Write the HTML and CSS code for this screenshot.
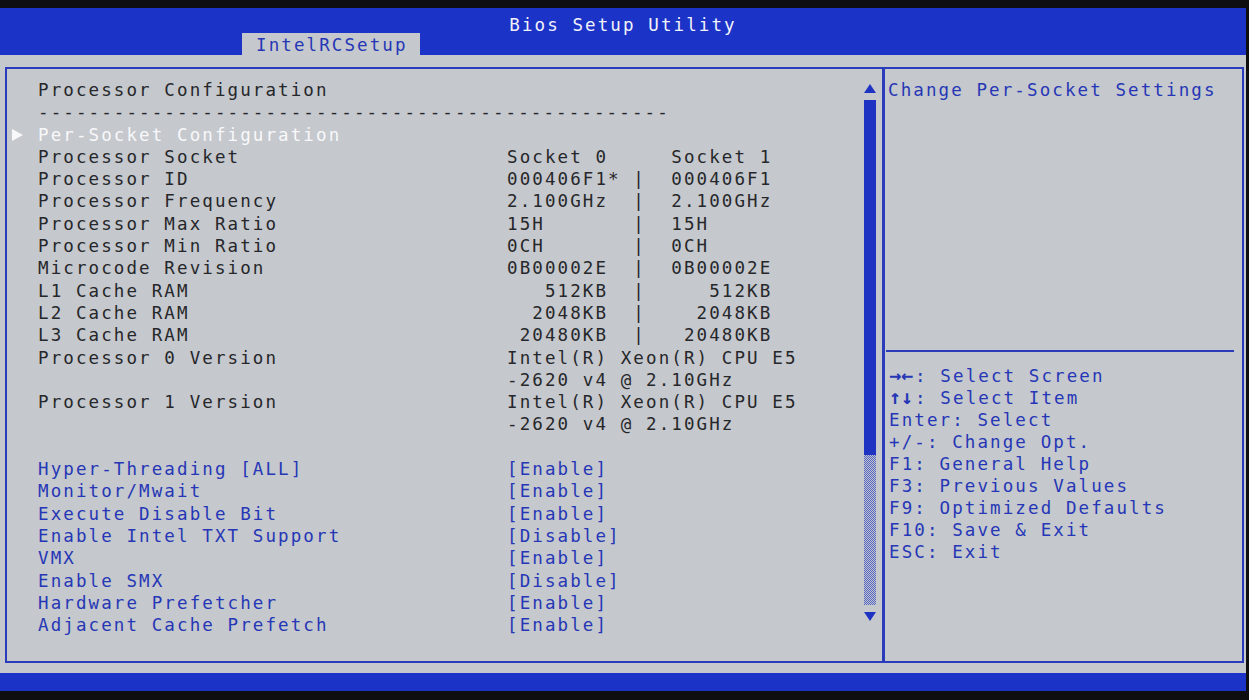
FILE: index.html
```html
<!DOCTYPE html>
<html lang="en">
  <head>
    <meta charset="UTF-8" />
    <title>Bios Setup Utility</title>
    <link rel="stylesheet" href="styles.css">
  </head>
  <body>
    <div class="screen">
      <header class="topbar">
        <div class="title">Bios Setup Utility</div>
        <div class="tabs"><span class="tab">IntelRCSetup</span></div>
      </header>

      <main class="main">
        <section class="setup">
          <div class="items">
            <div class="row"><span class="mark"></span><span class="wide">Processor Configuration</span></div>
            <div class="row"><span class="mark"></span><span class="wide">--------------------------------------------------</span></div>
            <div class="row active"><span class="mark"><i class="caret"></i></span><span class="wide">Per-Socket Configuration</span></div>
            <div class="row"><span class="mark"></span><span>Processor Socket</span><span>Socket 0     Socket 1</span></div>
            <div class="row"><span class="mark"></span><span>Processor ID</span><span>000406F1* |  000406F1</span></div>
            <div class="row"><span class="mark"></span><span>Processor Frequency</span><span>2.100GHz  |  2.100GHz</span></div>
            <div class="row"><span class="mark"></span><span>Processor Max Ratio</span><span>15H       |  15H</span></div>
            <div class="row"><span class="mark"></span><span>Processor Min Ratio</span><span>0CH       |  0CH</span></div>
            <div class="row"><span class="mark"></span><span>Microcode Revision</span><span>0B00002E  |  0B00002E</span></div>
            <div class="row"><span class="mark"></span><span>L1 Cache RAM</span><span>   512KB  |     512KB</span></div>
            <div class="row"><span class="mark"></span><span>L2 Cache RAM</span><span>  2048KB  |    2048KB</span></div>
            <div class="row"><span class="mark"></span><span>L3 Cache RAM</span><span> 20480KB  |   20480KB</span></div>
            <div class="row"><span class="mark"></span><span>Processor 0 Version</span><span>Intel(R) Xeon(R) CPU E5</span></div>
            <div class="row"><span class="mark"></span><span></span><span>-2620 v4 @ 2.10GHz</span></div>
            <div class="row"><span class="mark"></span><span>Processor 1 Version</span><span>Intel(R) Xeon(R) CPU E5</span></div>
            <div class="row"><span class="mark"></span><span></span><span>-2620 v4 @ 2.10GHz</span></div>
            <div class="row"></div>
            <div class="row opt"><span class="mark"></span><span>Hyper-Threading [ALL]</span><span>[Enable]</span></div>
            <div class="row opt"><span class="mark"></span><span>Monitor/Mwait</span><span>[Enable]</span></div>
            <div class="row opt"><span class="mark"></span><span>Execute Disable Bit</span><span>[Enable]</span></div>
            <div class="row opt"><span class="mark"></span><span>Enable Intel TXT Support</span><span>[Disable]</span></div>
            <div class="row opt"><span class="mark"></span><span>VMX</span><span>[Enable]</span></div>
            <div class="row opt"><span class="mark"></span><span>Enable SMX</span><span>[Disable]</span></div>
            <div class="row opt"><span class="mark"></span><span>Hardware Prefetcher</span><span>[Enable]</span></div>
            <div class="row opt"><span class="mark"></span><span>Adjacent Cache Prefetch</span><span>[Enable]</span></div>
          </div>
          <div class="scrollbar">
            <span class="arrow up"></span>
            <span class="thumb"></span>
            <span class="track"></span>
            <span class="arrow down"></span>
          </div>
        </section>

        <aside class="help">
          <div class="help-top">Change Per-Socket Settings</div>
          <ul class="keys">
            <li><b>→←</b>: Select Screen</li>
            <li><b>↑↓</b>: Select Item</li>
            <li>Enter: Select</li>
            <li>+/-: Change Opt.</li>
            <li>F1: General Help</li>
            <li>F3: Previous Values</li>
            <li>F9: Optimized Defaults</li>
            <li>F10: Save &amp; Exit</li>
            <li>ESC: Exit</li>
          </ul>
        </aside>
      </main>

      <footer class="bottombar"></footer>
    </div>
  </body>
</html>
```

FILE: styles.css
```css
/* Base */
body {
  margin: 0;
  background: #0e0e11;
  font-family: "DejaVu Sans Mono", "Liberation Mono", monospace;
  font-size: 17.5px;
  letter-spacing: 2.1px;
  color: #26272a;
  overflow: hidden;
}

.screen {
  width: 1246px;
  height: 700px;
  padding-top: 8px;
  box-sizing: border-box;
  display: flex;
  flex-direction: column;
}

/* Top bar and tab */
.topbar {
  height: 47px;
  background: #1c33c8;
  display: flex;
  flex-direction: column;
}

.title {
  color: #f1f2f8;
  text-align: center;
  line-height: 20px;
  height: 25px;
  box-sizing: border-box;
  padding-top: 7px;
}

.tabs {
  padding-left: 242px;
}

.tab {
  display: inline-block;
  background: #c5c8cd;
  color: #2537b6;
  line-height: 19px;
  height: 22px;
  box-sizing: border-box;
  padding: 3px 12px 0 14px;
}

/* Main area */
.main {
  height: 618px;
  box-sizing: border-box;
  background: #c5c8cd;
  display: flex;
  padding: 12px 2px 10px 5px;
}

.setup {
  flex: 1;
  display: flex;
  border: 2px solid #2a3bbb;
  border-right: 0;
  padding: 10px 6px 0 5px;
}

.items {
  flex: 1;
}

.row {
  display: grid;
  grid-template-columns: 26px 469px auto;
  height: 22.3px;
  line-height: 22.3px;
  white-space: pre;
}

.row .wide {
  grid-column: 2 / -1;
}

.row.active {
  color: #f8f8fa;
}

.row.opt {
  color: #2537b6;
}

.mark {
  display: flex;
  align-items: center;
}

.caret {
  width: 0;
  height: 0;
  border-left: 11px solid #f8f8fa;
  border-top: 6px solid transparent;
  border-bottom: 6px solid transparent;
}

/* Scrollbar */
.scrollbar {
  width: 12px;
  margin-top: 5px;
  display: flex;
  flex-direction: column;
  align-items: center;
}

.arrow {
  width: 0;
  height: 0;
  border-left: 6px solid transparent;
  border-right: 6px solid transparent;
}

.arrow.up {
  border-bottom: 9px solid #1f33c2;
}

.arrow.down {
  margin-top: 7px;
  border-top: 9px solid #1f33c2;
}

.thumb {
  width: 12px;
  height: 355px;
  margin-top: 7px;
  background: #1f33c2;
}

.track {
  width: 12px;
  height: 150px;
  background: repeating-conic-gradient(#5262c4 0 25%, #c5c8cd 0 50%) 0 0 / 2px 2px;
}

/* Help panel */
.help {
  width: 362px;
  box-sizing: border-box;
  border: 2px solid #2a3bbb;
  border-left-width: 3px;
  color: #2537b6;
}

.help-top {
  height: 283px;
  box-sizing: border-box;
  padding: 10px 0 0 2px;
  margin: 0 8px 0 1px;
  line-height: 22.3px;
  border-bottom: 2px solid #2a3bbb;
}

.keys {
  list-style: none;
  margin: 0;
  padding: 13px 0 0 4px;
}

.keys li {
  line-height: 22px;
  white-space: pre;
}

.keys b {
  font-size: 20px;
  line-height: 0;
  letter-spacing: 0;
  margin-right: 2px;
}

/* Bottom bar */
.bottombar {
  height: 18px;
  background: #1c33c8;
}
```
